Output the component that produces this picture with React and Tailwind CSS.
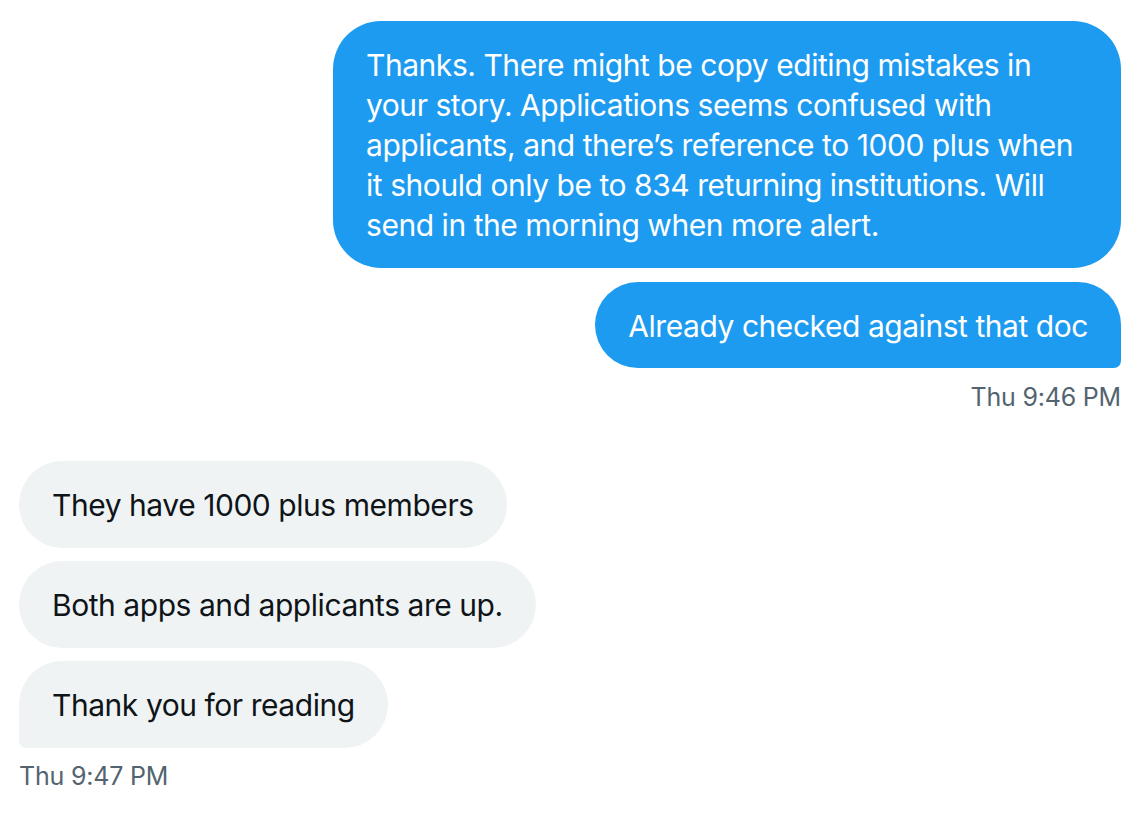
export default function App() {
  return (
    <div className="min-h-screen bg-white pt-[21px] pl-[19px] pr-[21px] font-['Inter',sans-serif] tracking-[-0.45px]">
      {/* sent */}
      <div className="flex flex-col items-end">
        <div className="w-[788px] whitespace-nowrap bg-[#1d9bf0] text-white text-[30px] leading-[40px] px-[33px] pt-[24px] pb-[23px] rounded-[48px]">
          Thanks. There might be copy editing mistakes in<br />
          your story. Applications seems confused with<br />
          applicants, and there’s reference to 1000 plus when<br />
          it should only be to 834 returning institutions. Will<br />
          send in the morning when more alert.
        </div>
        <div className="mt-[14px] bg-[#1d9bf0] text-white text-[30px] leading-[40px] px-[33px] pt-[24px] pb-[22px] rounded-[48px] rounded-br-[8px]">
          Already checked against that doc
        </div>
        <div className="mt-[13px] text-[25px] leading-[32px] tracking-[-0.2px] text-[#536471]">Thu 9:46 PM</div>
      </div>

      {/* received */}
      <div className="mt-[48px] flex flex-col items-start gap-[13px]">
        <div className="bg-[#eff3f4] text-[#0f1419] text-[30px] leading-[40px] px-[33px] pt-[24px] pb-[23px] rounded-[48px]">
          They have 1000 plus members
        </div>
        <div className="bg-[#eff3f4] text-[#0f1419] text-[30px] leading-[40px] px-[33px] pt-[24px] pb-[23px] rounded-[48px]">
          Both apps and applicants are up.
        </div>
        <div className="bg-[#eff3f4] text-[#0f1419] text-[30px] leading-[40px] px-[33px] pt-[24px] pb-[23px] rounded-[48px] rounded-bl-[8px]">
          Thank you for reading
        </div>
      </div>
      <div className="mt-[12px] text-[25px] leading-[32px] tracking-[-0.2px] text-[#536471]">Thu 9:47 PM</div>
    </div>
  );
}
